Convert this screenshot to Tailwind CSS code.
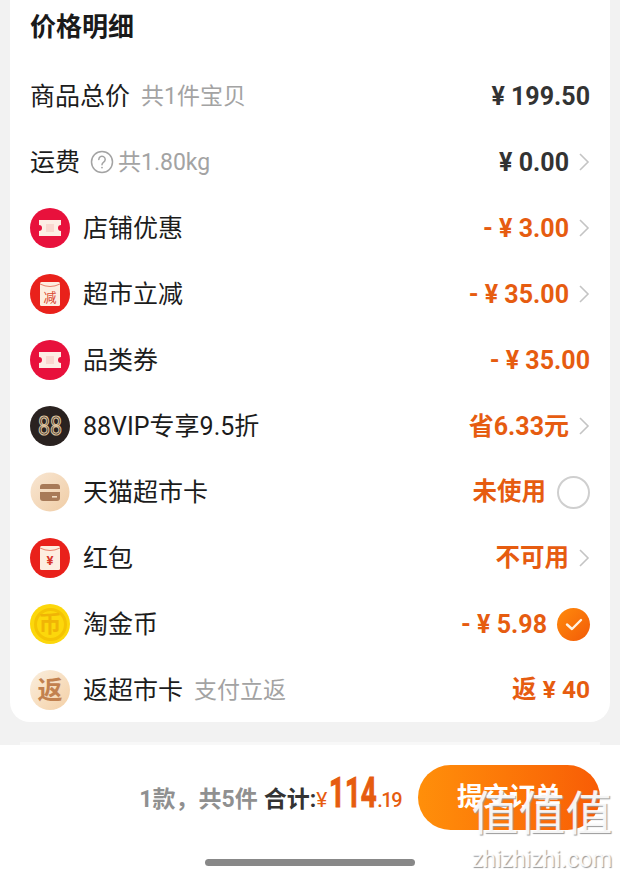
<!DOCTYPE html>
<html lang="zh-CN">
<head>
<meta charset="utf-8">
<script src="https://cdn.jsdelivr.net/npm/@tailwindcss/browser@4"></script>
</head>
<body class="w-[620px] h-[878px] overflow-hidden bg-[#f2f2f2] text-[#1c1c1c] font-['Roboto','Noto_Sans_CJK_SC',sans-serif] relative">
<main class="flex flex-col h-[878px]">
  <section class="mx-[10px] h-[722px] bg-white rounded-b-[20px] px-[20px] shrink-0">
    <h2 class="h-[54px] mb-[9px] flex items-center text-[26px] font-bold text-[#1a1a1a]">价格明细</h2>

    <div class="h-[66px] flex items-center text-[25px] leading-none">
      <span>商品总价</span><span class="ml-[11px] text-[#a3a3a3] text-[23px]">共1件宝贝</span>
      <span class="ml-auto font-bold text-[#333] text-[25px]">¥ 199.50</span>
    </div>

    <div class="h-[66px] flex items-center text-[25px] leading-none">
      <span>运费</span>
      <svg class="ml-[10px] w-[24px] h-[24px]" viewBox="0 0 24 24" fill="none" stroke="#a3a3a3" stroke-width="1.5"><circle cx="12" cy="12" r="10.5"/><path d="M8.8 9.4a3.2 3.2 0 1 1 4.9 2.7c-1.1.7-1.7 1.3-1.7 2.6" stroke-linecap="round"/><circle cx="12" cy="17.6" r=".9" fill="#a3a3a3" stroke="none"/></svg>
      <span class="ml-[4px] text-[#a3a3a3] text-[23px]">共1.80kg</span>
      <span class="ml-auto font-bold text-[#333] text-[25px]">¥ 0.00</span>
      <svg class="ml-[9px] w-[12px] h-[20px]" viewBox="0 0 12 20" fill="none" stroke="#c4c4c4" stroke-width="1.6"><path d="M2 2l8 8-8 8"/></svg>
    </div>

    <div class="h-[66px] flex items-center text-[25px] leading-none">
      <svg class="w-[40px] h-[40px] mr-[13px]" viewBox="0 0 40 40"><circle cx="20" cy="20" r="20" fill="#e8113c"/><path d="M9 12h22v5a3 3 0 0 0 0 6v5H9v-5a3 3 0 0 0 0-6z" fill="#fdeee4"/><path d="M16 16h8v8h-8z" fill="#f9d8cf"/></svg>
      <span>店铺优惠</span>
      <span class="ml-auto font-bold text-[#e65c10] text-[25px]">- ¥ 3.00</span>
      <svg class="ml-[9px] w-[12px] h-[20px]" viewBox="0 0 12 20" fill="none" stroke="#c4c4c4" stroke-width="1.6"><path d="M2 2l8 8-8 8"/></svg>
    </div>

    <div class="h-[66px] flex items-center text-[25px] leading-none">
      <svg class="w-[40px] h-[40px] mr-[13px]" viewBox="0 0 40 40"><circle cx="20" cy="20" r="20" fill="#e9211b"/><rect x="10" y="8" width="20" height="24" rx="1.5" fill="#fdeee0"/><path d="M10 10q10 5 20 0" fill="none" stroke="#e9806a" stroke-width="1"/><text x="20" y="28" text-anchor="middle" font-size="13" font-family="Noto Sans CJK SC" fill="#d9482f">减</text></svg>
      <span>超市立减</span>
      <span class="ml-auto font-bold text-[#e65c10] text-[25px]">- ¥ 35.00</span>
      <svg class="ml-[9px] w-[12px] h-[20px]" viewBox="0 0 12 20" fill="none" stroke="#c4c4c4" stroke-width="1.6"><path d="M2 2l8 8-8 8"/></svg>
    </div>

    <div class="h-[66px] flex items-center text-[25px] leading-none">
      <svg class="w-[40px] h-[40px] mr-[13px]" viewBox="0 0 40 40"><circle cx="20" cy="20" r="20" fill="#e8113c"/><path d="M9 12h22v5a3 3 0 0 0 0 6v5H9v-5a3 3 0 0 0 0-6z" fill="#fdeee4"/><path d="M16 16h8v8h-8z" fill="#f9d8cf"/></svg>
      <span>品类券</span>
      <span class="ml-auto font-bold text-[#e65c10] text-[25px]">- ¥ 35.00</span>
    </div>

    <div class="h-[66px] flex items-center text-[25px] leading-none">
      <div class="w-[40px] h-[40px] mr-[13px] rounded-full bg-[#2a2220] shrink-0">
        <svg class="w-[40px] h-[40px]" viewBox="0 0 40 40"><text x="8" y="29" font-family="Roboto" font-size="25" textLength="24" lengthAdjust="spacingAndGlyphs" fill="none" stroke="#dcc09c" stroke-width="1.2">88</text></svg>
      </div>
      <span>88VIP专享9.5折</span>
      <span class="ml-auto font-bold text-[#e65c10] text-[25px]">省6.33元</span>
      <svg class="ml-[9px] w-[12px] h-[20px]" viewBox="0 0 12 20" fill="none" stroke="#c4c4c4" stroke-width="1.6"><path d="M2 2l8 8-8 8"/></svg>
    </div>

    <div class="h-[66px] flex items-center text-[25px] leading-none">
      <svg class="w-[40px] h-[40px] mr-[13px]" viewBox="0 0 40 40"><defs><linearGradient id="card" x1="0" y1="0" x2="1" y2="1"><stop offset="0" stop-color="#f8e6d2"/><stop offset="1" stop-color="#f0cda6"/></linearGradient></defs><circle cx="20" cy="20" r="19.5" fill="url(#card)"/><path d="M10 17v-2a3 3 0 0 1 3-3h14a3 3 0 0 1 3 3v2z" fill="#a87a58"/><path d="M10 20h20v6a3 3 0 0 1-3 3H13a3 3 0 0 1-3-3z" fill="#a87a58"/><path d="M22 24h5v1.6h-5z" fill="#f3dcc3"/></svg>
      <span>天猫超市卡</span>
      <span class="ml-auto font-bold text-[#e65c10] text-[24.5px]">未使用</span>
      <span class="ml-[11px] w-[33px] h-[33px] rounded-full border-2 border-[#cfcfcf]"></span>
    </div>

    <div class="h-[66px] flex items-center text-[25px] leading-none">
      <svg class="w-[40px] h-[40px] mr-[13px]" viewBox="0 0 40 40"><circle cx="20" cy="20" r="20" fill="#e9211b"/><rect x="10" y="8" width="20" height="24" rx="1.5" fill="#fdeee0"/><path d="M10 10q10 5 20 0" fill="none" stroke="#e9806a" stroke-width="1"/><text x="20" y="27" text-anchor="middle" font-size="13" font-weight="700" font-family="Roboto" fill="#d9362a">¥</text></svg>
      <span>红包</span>
      <span class="ml-auto font-bold text-[#e65c10] text-[24.5px]">不可用</span>
      <svg class="ml-[9px] w-[12px] h-[20px]" viewBox="0 0 12 20" fill="none" stroke="#c4c4c4" stroke-width="1.6"><path d="M2 2l8 8-8 8"/></svg>
    </div>

    <div class="h-[66px] flex items-center text-[25px] leading-none">
      <div class="w-[40px] h-[40px] mr-[13px] rounded-full bg-[#fcd70b] flex items-center justify-center shrink-0">
        <div class="w-[33px] h-[33px] rounded-full border-[3px] border-[#f4c304] flex items-center justify-center text-[23px] leading-none font-bold text-[#f0b406]">币</div>
      </div>
      <span>淘金币</span>
      <span class="ml-auto font-bold text-[#e65c10] text-[25px]">- ¥ 5.98</span>
      <span class="ml-[10px] w-[33px] h-[33px] rounded-full bg-gradient-to-br from-[#ff8a0c] to-[#f25a08] flex items-center justify-center">
        <svg class="w-[20px] h-[20px]" viewBox="0 0 20 20" fill="none" stroke="#fff2e2" stroke-width="2.4" stroke-linecap="round" stroke-linejoin="round"><path d="M3 10.5l5 4.5 9-9"/></svg>
      </span>
    </div>

    <div class="h-[66px] flex items-center text-[25px] leading-none">
      <div class="w-[40px] h-[40px] mr-[13px] rounded-full bg-gradient-to-br from-[#faeedd] to-[#f4d0a6] flex items-center justify-center shrink-0 text-[25px] font-bold text-[#c2814f]">返</div>
      <span>返超市卡</span><span class="ml-[11px] text-[#a3a3a3] text-[23px]">支付立返</span>
      <span class="ml-auto font-bold text-[#e65c10] text-[24.5px]">返 ¥ 40</span>
    </div>
  </section>

  <div class="h-[20px] shrink-0"></div>
  <div class="h-[3px] mx-[20px] bg-[#f8f8f8] shrink-0"></div>

  <footer class="flex-1 bg-white relative flex flex-col">
    <div class="h-[85px] pr-[20px] flex items-end justify-end">
      <div class="flex items-baseline mr-[17px] pb-[16px] leading-none">
        <span class="text-[23px] font-bold text-[#909090]">1款，共5件</span>
        <span class="ml-[6px] text-[23px] font-bold text-[#333]">合计:</span>
        <span class="text-[21px] text-[#e65c10] w-[13px]">¥</span>
        <span class="w-[47px] inline-block"><span class="inline-block text-[42px] font-bold text-[#e65c10] [-webkit-text-stroke:1px_#e65c10] scale-x-[0.66] origin-left">114</span></span>
        <span class="text-[20px] font-medium text-[#e65c10] tracking-[-1.5px] ml-[1px]">.19</span>
      </div>
      <button class="w-[182px] h-[65px] rounded-full bg-gradient-to-r from-[#ff8f0a] to-[#f85c06] text-white text-[26px] font-bold">提交订单</button>
    </div>
    <div class="mt-[29px] mx-auto w-[210px] h-[7px] rounded-full bg-[#888888]"></div>
    <div class="absolute left-[469px] top-[45px] w-[146px] text-center text-white/90 leading-none [text-shadow:1px_1px_1px_#999]">
      <div class="text-[47px] h-[58px] font-normal whitespace-nowrap">值值值</div>
      <div class="text-[23px] whitespace-nowrap">zhizhizhi.com</div>
    </div>
  </footer>
</main>
</body>
</html>
